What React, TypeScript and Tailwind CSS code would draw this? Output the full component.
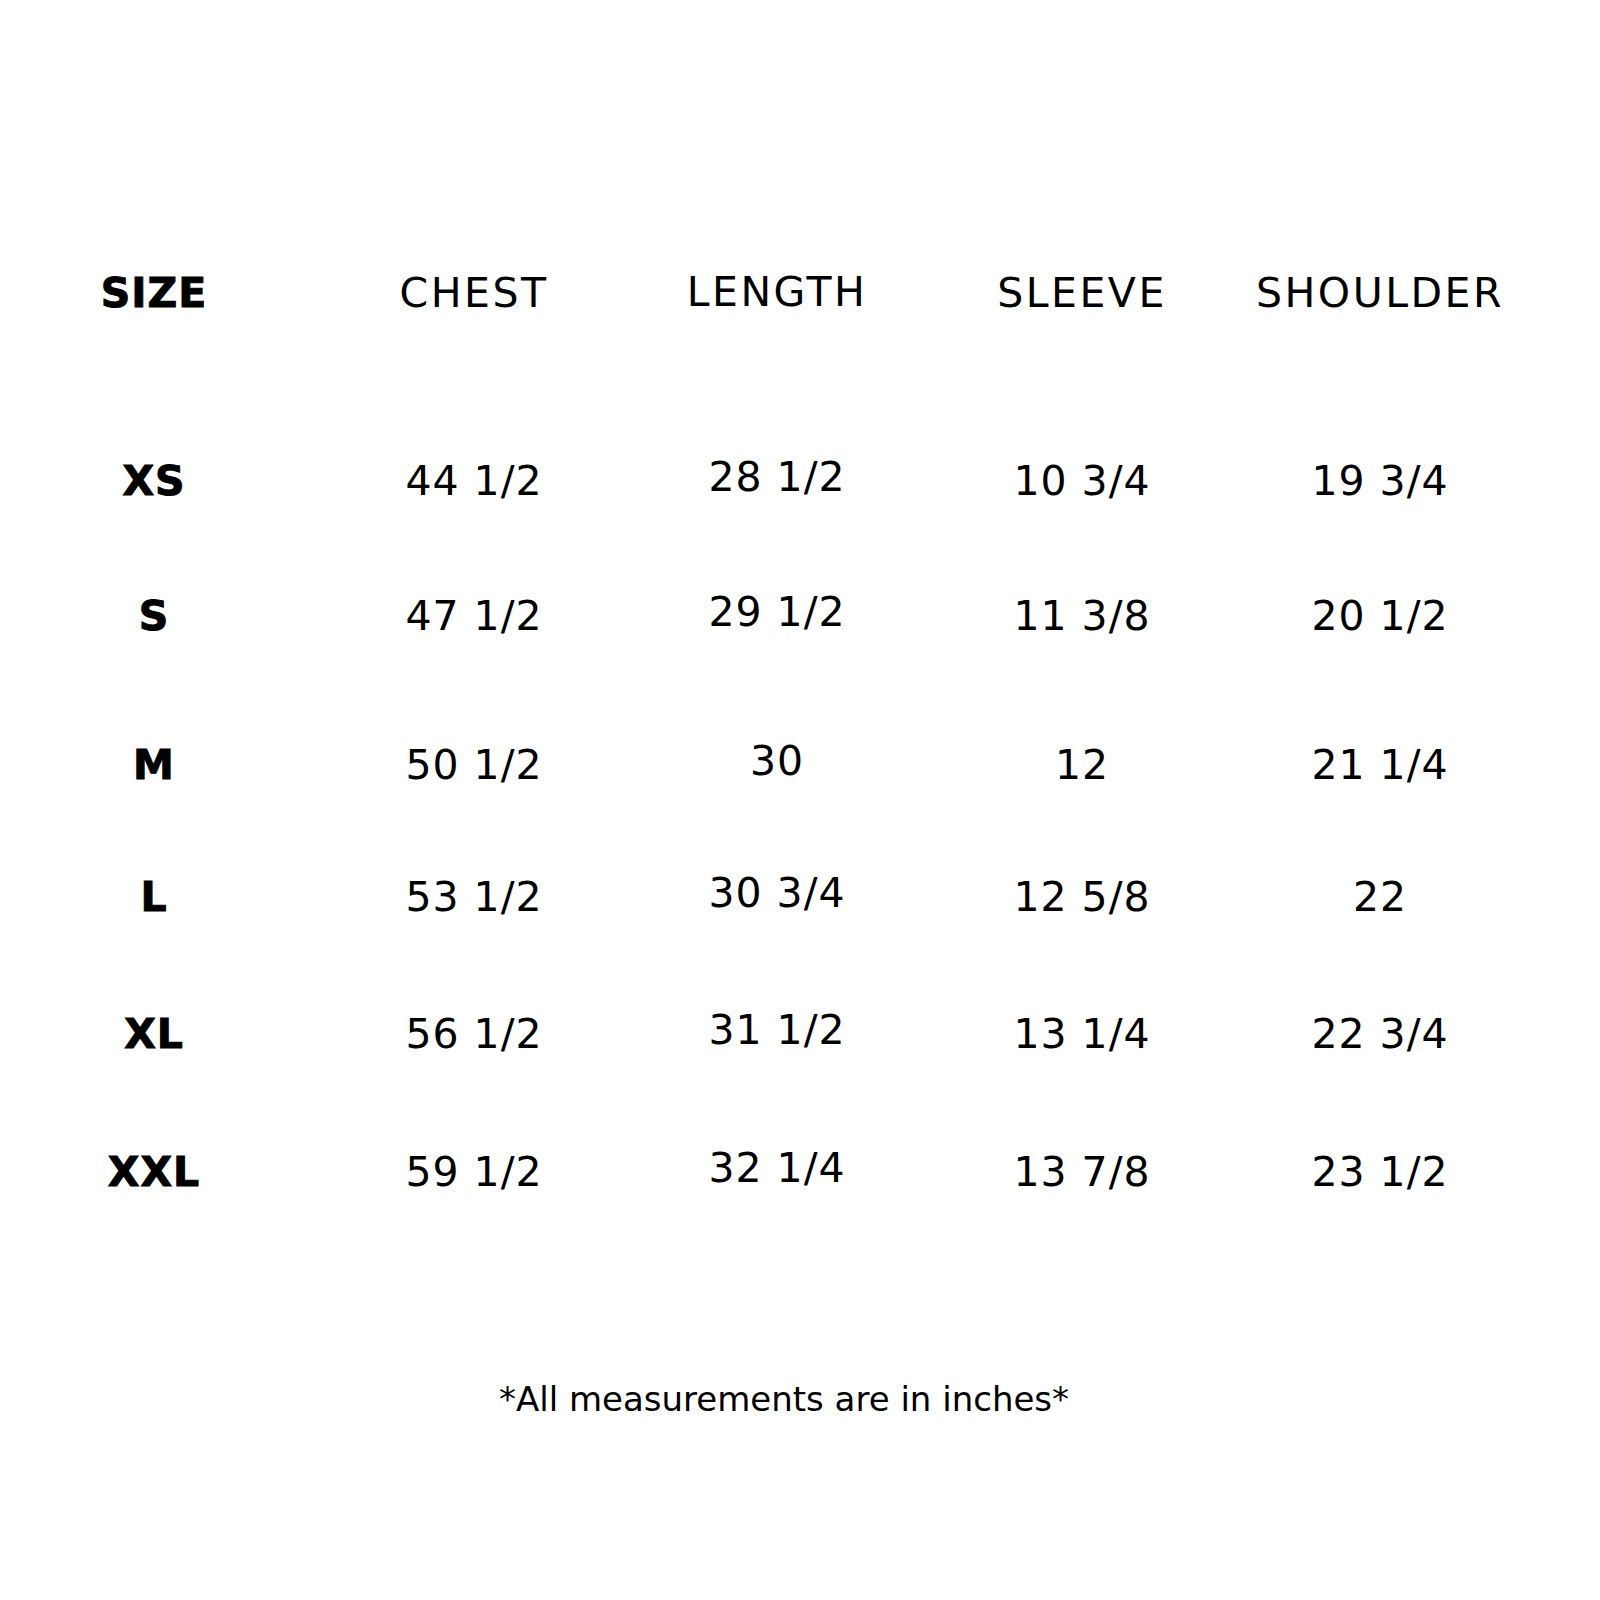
const ROWS = [
  { size: 'XS', chest: '44 1/2', length: '28 1/2', sleeve: '10 3/4', shoulder: '19 3/4', mt: 'mt-[125px]' },
  { size: 'S', chest: '47 1/2', length: '29 1/2', sleeve: '11 3/8', shoulder: '20 1/2', mt: 'mt-[75px]' },
  { size: 'M', chest: '50 1/2', length: '30', sleeve: '12', shoulder: '21 1/4', mt: 'mt-[89px]' },
  { size: 'L', chest: '53 1/2', length: '30 3/4', sleeve: '12 5/8', shoulder: '22', mt: 'mt-[72px]' },
  { size: 'XL', chest: '56 1/2', length: '31 1/2', sleeve: '13 1/4', shoulder: '22 3/4', mt: 'mt-[77px]' },
  { size: 'XXL', chest: '59 1/2', length: '32 1/4', sleeve: '13 7/8', shoulder: '23 1/2', mt: 'mt-[78px]' },
]

const grid = 'grid grid-cols-[308px_332px_274px_336px_260px] h-[60px] items-center text-center'

export default function App() {
  return (
    <div
      className="w-[1600px] h-[1600px] bg-white text-black pt-[262px]"
      style={{ fontFamily: '"DejaVu Sans", "Liberation Sans", sans-serif' }}
    >
      {/* header */}
      <div className={`${grid} text-[41px] tracking-[2.5px]`}>
        <div className="font-bold tracking-[1px] [-webkit-text-stroke:1px_black]">SIZE</div>
        <div>CHEST</div>
        <div className="mb-[2px]">LENGTH</div>
        <div>SLEEVE</div>
        <div>SHOULDER</div>
      </div>

      {ROWS.map((r) => (
        <div key={r.size} className={`${grid} ${r.mt} text-[41px] tracking-[1px]`}>
          <div className="font-bold [-webkit-text-stroke:1px_black]">{r.size}</div>
          <div>{r.chest}</div>
          <div className="mb-[8px]">{r.length}</div>
          <div>{r.sleeve}</div>
          <div>{r.shoulder}</div>
        </div>
      ))}

      <div className="mt-[181px] h-[40px] flex items-center justify-center text-[34px] pr-[32px]">
        *All measurements are in inches*
      </div>
    </div>
  )
}
